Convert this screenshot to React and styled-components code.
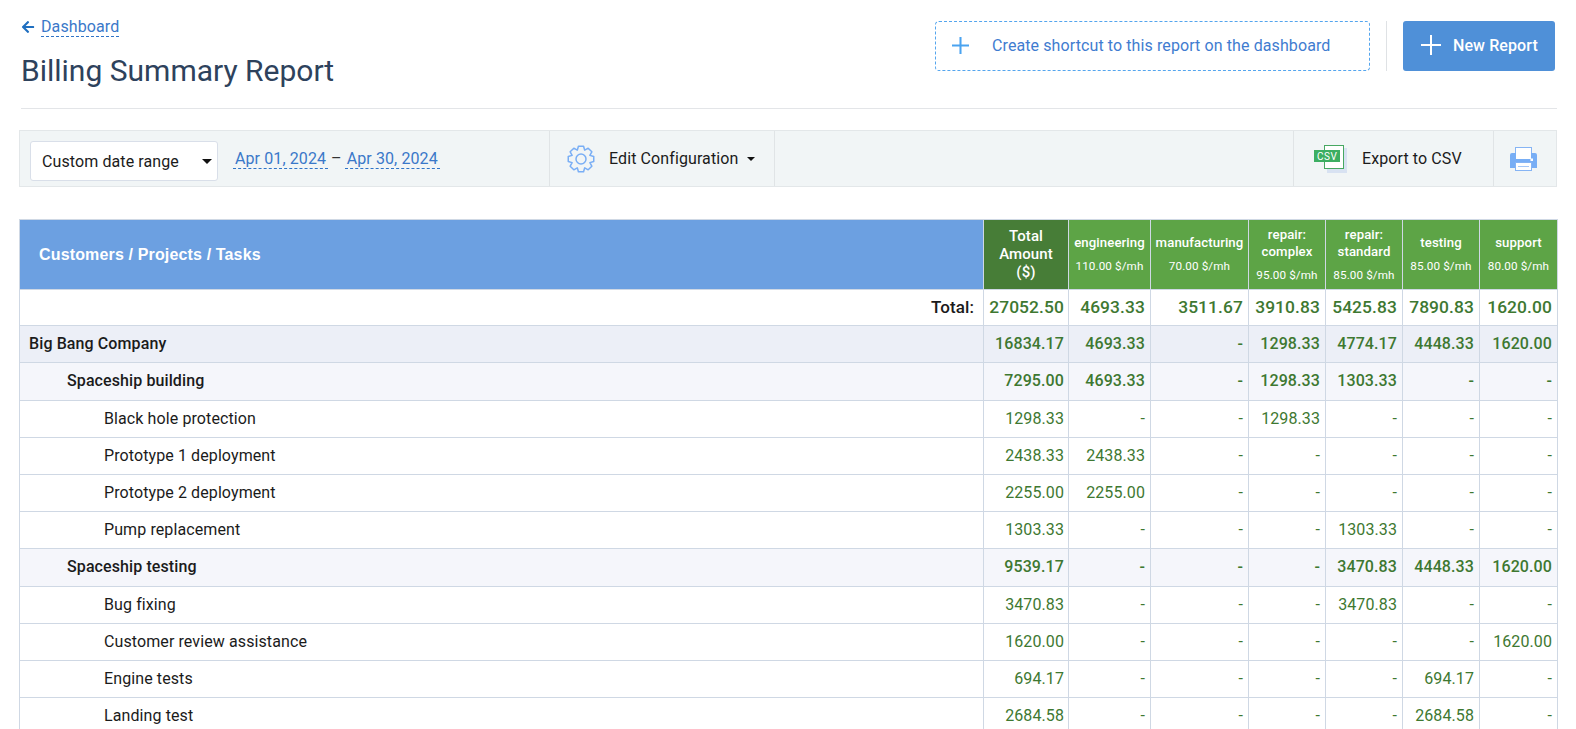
import React from "react";
import styled, { createGlobalStyle } from "styled-components";
import { FaArrowLeft } from "react-icons/fa";

const GlobalStyle = createGlobalStyle`
  html, body {
    margin: 0;
    padding: 0;
    height: 729px;
    overflow: hidden;
    background: #fff;
  }
  body {
    font-family: Roboto, "Liberation Sans", sans-serif;
    font-size: 16px;
    letter-spacing: 0.1px;
    color: #1b1b1b;
  }
`;

const Page = styled.div`
  padding: 0 19px;
`;

const Header = styled.header`
  display: flex;
  justify-content: space-between;
  align-items: flex-start;
  margin-left: 2px;
  height: 109px;
  box-sizing: border-box;
  border-bottom: 1px solid #e3e5e8;
`;

const TitleBlock = styled.div`
  padding-top: 17px;
`;

const BackRow = styled.div`
  display: flex;
  align-items: center;
  height: 20px;
  color: #1f6fc0;
  font-size: 14px;
`;

const DashedLink = styled.a`
  color: #3a78c9;
  font-size: 16px;
  line-height: 19px;
  border-bottom: 1px dashed #2f74c8;
  cursor: pointer;
  padding: ${(p) => p.$pad || "0"};
  margin-left: ${(p) => p.$ml || "0"};
`;

const Title = styled.h1`
  margin: 14px 0 0;
  font-size: 30px;
  line-height: 40px;
  font-weight: 400;
  letter-spacing: 0;
  color: #2e425c;
`;

const Actions = styled.div`
  display: flex;
  align-items: center;
  padding: 21px 2px 0 0;
`;

const ShortcutButton = styled.button`
  display: flex;
  align-items: center;
  gap: 23px;
  width: 435px;
  height: 50px;
  padding: 0 0 2px 16px;
  box-sizing: border-box;
  background: #fff;
  border: 1px dashed #54a5ee;
  border-radius: 4px;
  color: #3f7cd0;
  font: 400 16px Roboto, sans-serif;
  letter-spacing: 0.1px;
`;

const Divider = styled.div`
  width: 1px;
  height: 50px;
  background: #dfe2e5;
  margin: 0 16px;
`;

const NewButton = styled.button`
  display: flex;
  align-items: center;
  gap: 12px;
  width: 152px;
  height: 50px;
  padding: 0 0 2px 18px;
  box-sizing: border-box;
  background: #4f90d8;
  border: 0;
  border-radius: 3px;
  color: #fff;
  font: 500 16px Roboto, sans-serif;
  letter-spacing: 0.1px;
`;

const Toolbar = styled.div`
  display: flex;
  align-items: stretch;
  height: 57px;
  margin-top: 21px;
  box-sizing: border-box;
  background: #f1f5f6;
  border: 1px solid #e3e7e9;
`;

const ToolSection = styled.div`
  display: flex;
  align-items: center;
  width: ${(p) => p.$w};
  box-sizing: border-box;
  padding-left: ${(p) => p.$pl || "0"};
  border-left: ${(p) => (p.$noBorder ? "0" : "1px solid #e0e4e6")};
`;

const Spacer = styled.div`
  flex: 1;
  border-left: 1px solid #e0e4e6;
`;

const SelectBox = styled.div`
  display: flex;
  align-items: center;
  justify-content: space-between;
  width: 188px;
  height: 40px;
  margin-top: 5px;
  padding: 0 5px 0 11px;
  box-sizing: border-box;
  background: #fff;
  border: 1px solid #d9dfe9;
  border-radius: 3px;
  color: #1b1b1b;
`;

const Caret = styled.span`
  display: inline-block;
  width: 0;
  height: 0;
  margin-left: ${(p) => p.$ml || "0"};
  border-left: ${(p) => p.$size || 4}px solid transparent;
  border-right: ${(p) => p.$size || 4}px solid transparent;
  border-top: ${(p) => p.$size || 4}px solid #111;
`;

const DateRange = styled.div`
  display: flex;
  align-items: center;
  margin-left: 15px;
  color: #333;
`;

const Dash = styled.span`
  margin: 0 3px;
`;

const ToolLabel = styled.span`
  margin-left: ${(p) => p.$ml};
`;

const Table = styled.table`
  margin-top: 32px;
  width: 1538px;
  table-layout: fixed;
  border-collapse: collapse;
  font-size: 16px;
`;

const Th = styled.th`
  height: 67px;
  padding: 0 2px 2px;
  border: 1px solid #cfd8e4;
  background: ${(p) => p.$bg};
  color: #fff;
  font-size: 13.2px;
  line-height: 17px;
  font-weight: 500;
`;

const NameTh = styled(Th)`
  padding: 0 0 0 19px;
  text-align: left;
  font-family: "Liberation Sans", Arial, sans-serif;
  font-size: 16px;
  font-weight: 700;
  letter-spacing: 0.15px;
`;

const TotalTh = styled(Th)`
  font-size: 15px;
  line-height: 18px;
`;

const Rate = styled.div`
  margin-top: 8px;
  font-size: 11.7px;
  line-height: 14px;
  font-weight: 400;
`;

const rowBackgrounds = { total: "#fff", customer: "#eceff7", project: "#f5f6fb", task: "#fff" };
const rowHeights = { total: 33, customer: 34, project: 35, task: 34 };

const Tr = styled.tr`
  background: ${(p) => rowBackgrounds[p.$kind]};
`;

const NameCell = styled.td`
  height: ${(p) => rowHeights[p.$kind]}px;
  padding: 0 9px 2px ${(p) => p.$indent}px;
  border: 1px solid #cfd8e4;
  text-align: ${(p) => (p.$kind === "total" ? "right" : "left")};
  font-size: ${(p) => (p.$kind === "total" ? "17px" : "16px")};
  font-weight: ${(p) => (p.$kind === "task" ? 400 : 500)};
  white-space: nowrap;
`;

const NumCell = styled.td`
  padding: 0 ${(p) => p.$pr}px 2px 0;
  border: 1px solid #cfd8e4;
  text-align: right;
  color: #3e7831;
  font-size: ${(p) => (p.$kind === "total" ? "17.4px" : "16px")};
  font-weight: ${(p) => (p.$kind === "task" ? 400 : 500)};
  white-space: nowrap;
`;

const columns = [
  { name: "engineering", rate: "110.00 $/mh", width: 82 },
  { name: "manufacturing", rate: "70.00 $/mh", width: 98 },
  { name: "repair: complex", rate: "95.00 $/mh", width: 77 },
  { name: "repair: standard", rate: "85.00 $/mh", width: 77 },
  { name: "testing", rate: "85.00 $/mh", width: 77 },
  { name: "support", rate: "80.00 $/mh", width: 78 },
];

const rows = [
  ["total", "Total:", "27052.50", "4693.33", "3511.67", "3910.83", "5425.83", "7890.83", "1620.00"],
  ["customer", "Big Bang Company", "16834.17", "4693.33", "-", "1298.33", "4774.17", "4448.33", "1620.00"],
  ["project", "Spaceship building", "7295.00", "4693.33", "-", "1298.33", "1303.33", "-", "-"],
  ["task", "Black hole protection", "1298.33", "-", "-", "1298.33", "-", "-", "-"],
  ["task", "Prototype 1 deployment", "2438.33", "2438.33", "-", "-", "-", "-", "-"],
  ["task", "Prototype 2 deployment", "2255.00", "2255.00", "-", "-", "-", "-", "-"],
  ["task", "Pump replacement", "1303.33", "-", "-", "-", "1303.33", "-", "-"],
  ["project", "Spaceship testing", "9539.17", "-", "-", "-", "3470.83", "4448.33", "1620.00"],
  ["task", "Bug fixing", "3470.83", "-", "-", "-", "3470.83", "-", "-"],
  ["task", "Customer review assistance", "1620.00", "-", "-", "-", "-", "-", "1620.00"],
  ["task", "Engine tests", "694.17", "-", "-", "-", "-", "694.17", "-"],
  ["task", "Landing test", "2684.58", "-", "-", "-", "-", "2684.58", "-"],
];

const indents = { total: 9, customer: 9, project: 47, task: 84 };

function PlusIcon({ size, color, weight = 2 }) {
  return (
    <svg width={size} height={size} viewBox="0 0 20 20" fill="none" stroke={color} strokeWidth={weight}>
      <path d="M10 0v20M0 10h20" />
    </svg>
  );
}

// 8 teeth, outline only
function gearPath() {
  const cx = 14;
  const cy = 14;
  const pts = [];
  for (let i = 0; i < 8; i++) {
    const a = (i * Math.PI) / 4 - Math.PI / 2;
    [
      [-0.39, 9.6],
      [-0.2, 13],
      [0.2, 13],
      [0.39, 9.6],
    ].forEach(([da, r]) => {
      pts.push(`${(cx + r * Math.cos(a + da)).toFixed(2)} ${(cy + r * Math.sin(a + da)).toFixed(2)}`);
    });
  }
  return "M" + pts.join("L") + "Z";
}

function GearIcon() {
  return (
    <svg width="28" height="28" viewBox="0 0 28 28" fill="none" stroke="#79aef5" strokeWidth="1.5" strokeLinejoin="round">
      <path d={gearPath()} />
      <circle cx="14" cy="14" r="5" />
    </svg>
  );
}

function CsvIcon() {
  return (
    <svg width="33" height="28" viewBox="0 0 33 28">
      <rect x="13" y="3" width="20" height="25" fill="#d8e2f2" />
      <rect x="10.5" y="0.5" width="19" height="23" fill="#fff" stroke="#47a862" />
      <rect x="0" y="5" width="26" height="12" fill="#3cae62" />
      <text x="3" y="14.8" fontFamily="Roboto, sans-serif" fontSize="10" fontWeight="400" letterSpacing="0.5" fill="#fff">CSV</text>
    </svg>
  );
}

function PrinterIcon() {
  return (
    <svg width="27" height="24" viewBox="0 0 27 24">
      <rect x="5.5" y="0.5" width="16" height="12" fill="#fff" stroke="#86b4f4" />
      <path d="M2 6h4v6h15V6h4a2 2 0 0 1 2 2v13h-6v-5H6v5H0V8a2 2 0 0 1 2-2z" fill="#78aef5" />
      <rect x="20.5" y="11.5" width="2.5" height="2.5" fill="#fff" />
      <rect x="5.5" y="15.5" width="16" height="8" fill="#fff" stroke="#86b4f4" />
      <path d="M8 19.5h11" stroke="#a6c8f7" />
    </svg>
  );
}

export default function App() {
  return (
    <Page>
      <GlobalStyle />
      <Header>
        <TitleBlock>
          <BackRow>
            <FaArrowLeft />
            <DashedLink $ml="6px">Dashboard</DashedLink>
          </BackRow>
          <Title>Billing Summary Report</Title>
        </TitleBlock>
        <Actions>
          <ShortcutButton>
            <PlusIcon size={17} color="#4aa3f0" weight={2.4} />
            Create shortcut to this report on the dashboard
          </ShortcutButton>
          <Divider />
          <NewButton>
            <PlusIcon size={20} color="#fff" />
            New Report
          </NewButton>
        </Actions>
      </Header>

      <Toolbar>
        <ToolSection $w="529px" $pl="10px" $noBorder>
          <SelectBox>
            Custom date range
            <Caret $size={5} />
          </SelectBox>
          <DateRange>
            <DashedLink $pad="0 2px">Apr 01, 2024</DashedLink>
            <Dash>–</Dash>
            <DashedLink $pad="0 2px">Apr 30, 2024</DashedLink>
          </DateRange>
        </ToolSection>
        <ToolSection $w="225px" $pl="17px">
          <GearIcon />
          <ToolLabel $ml="14px">Edit Configuration</ToolLabel>
          <Caret $ml="9px" />
        </ToolSection>
        <Spacer />
        <ToolSection $w="200px" $pl="20px">
          <CsvIcon />
          <ToolLabel $ml="15px">Export to CSV</ToolLabel>
        </ToolSection>
        <ToolSection $w="63px" $pl="16px">
          <PrinterIcon />
        </ToolSection>
      </Toolbar>

      <Table>
        <colgroup>
          <col style={{ width: 964 }} />
          <col style={{ width: 85 }} />
          {columns.map((c) => (
            <col key={c.name} style={{ width: c.width }} />
          ))}
        </colgroup>
        <thead>
          <tr>
            <NameTh $bg="#6ca0e1">Customers / Projects / Tasks</NameTh>
            <TotalTh $bg="#477d37">
              Total
              <br />
              Amount
              <br />
              ($)
            </TotalTh>
            {columns.map((c) => (
              <Th key={c.name} $bg="#5da446">
                {c.name}
                <Rate>{c.rate}</Rate>
              </Th>
            ))}
          </tr>
        </thead>
        <tbody>
          {rows.map(([kind, name, ...values]) => (
            <Tr key={name} $kind={kind}>
              <NameCell $kind={kind} $indent={indents[kind]}>
                {name}
              </NameCell>
              {values.map((v, i) => (
                <NumCell key={i} $kind={kind} $pr={i === 0 ? 4 : 5}>
                  {v}
                </NumCell>
              ))}
            </Tr>
          ))}
        </tbody>
      </Table>
    </Page>
  );
}
